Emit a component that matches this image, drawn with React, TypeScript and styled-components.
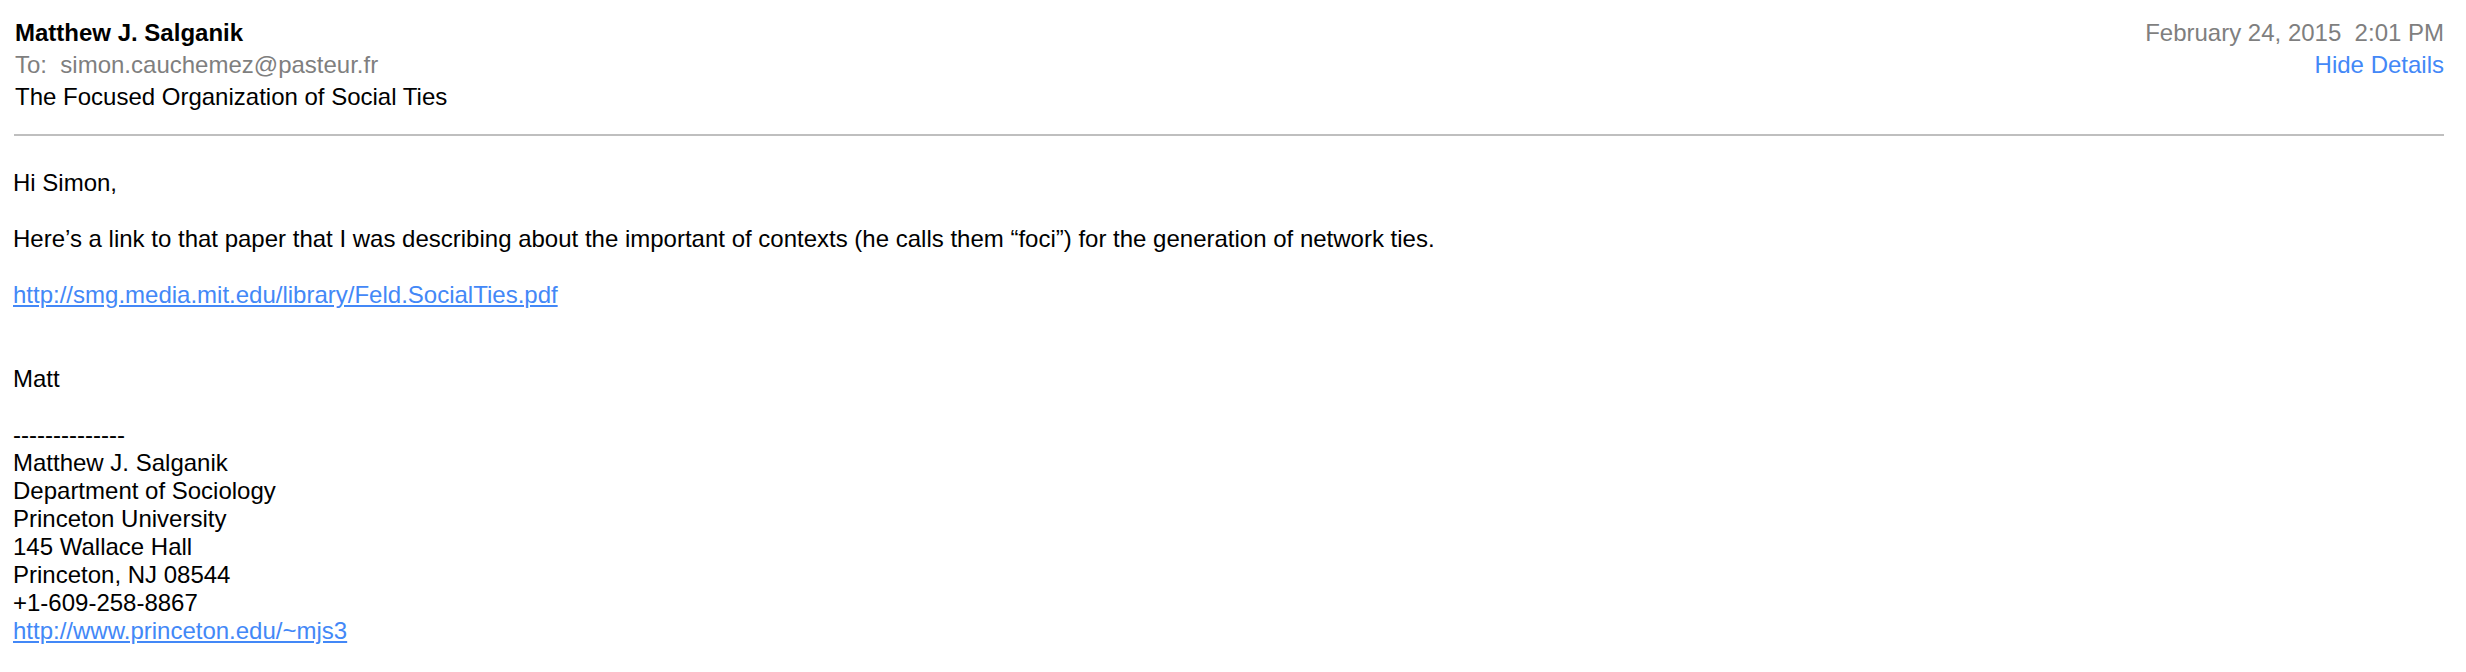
import styled, { createGlobalStyle } from "styled-components";

const GlobalStyle = createGlobalStyle`
  html, body {
    margin: 0;
    padding: 0;
    background: #ffffff;
  }
  body {
    font-family: "Liberation Sans", Arial, Helvetica, sans-serif;
    color: #000000;
  }
`;

const Message = styled.div`
  padding: 0 22px 0 13px;
`;

const Header = styled.div`
  display: flex;
  justify-content: space-between;
  align-items: flex-start;
  margin-left: 1px;
  padding-top: 17px;
  padding-left: 1px;
  padding-bottom: 21px;
  border-bottom: 2px solid #bfbfbf;
  font-size: 24px;
  line-height: 32px;
`;

const HeaderLeft = styled.div`
  display: flex;
  flex-direction: column;
`;

const HeaderRight = styled.div`
  display: flex;
  flex-direction: column;
  align-items: flex-end;
`;

const Sender = styled.div`
  font-weight: bold;
`;

const Meta = styled.div`
  color: #7f7f7f;
  white-space: pre;
`;

const Subject = styled.div``;

const DetailsLink = styled.a`
  color: #4388f7;
  text-decoration: none;
  cursor: pointer;
`;

const Body = styled.div`
  padding-top: 33px;
  font-size: 24px;
  line-height: 28px;
`;

const Line = styled.div<{ $gap?: number }>`
  min-height: 28px;
  margin-bottom: ${(p) => (p.$gap ?? 0) * 28}px;
`;

const Link = styled.a`
  color: #4388f7;
  text-decoration: underline;
  text-underline-offset: 2px;
`;

const signature = [
  "Matthew J. Salganik",
  "Department of Sociology",
  "Princeton University",
  "145 Wallace Hall",
  "Princeton, NJ 08544",
  "+1-609-258-8867",
];

export default function App() {
  return (
    <>
      <GlobalStyle />
      <Message>
        <Header>
          <HeaderLeft>
            <Sender>Matthew J. Salganik</Sender>
            <Meta>To:  simon.cauchemez@pasteur.fr</Meta>
            <Subject>The Focused Organization of Social Ties</Subject>
          </HeaderLeft>
          <HeaderRight>
            <Meta>February 24, 2015  2:01 PM</Meta>
            <DetailsLink>Hide Details</DetailsLink>
          </HeaderRight>
        </Header>
        <Body>
          <Line $gap={1}>Hi Simon,</Line>
          <Line $gap={1}>
            Here’s a link to that paper that I was describing about the
            important of contexts (he calls them “foci”) for the generation of
            network ties.
          </Line>
          <Line $gap={2}>
            <Link href="#">http://smg.media.mit.edu/library/Feld.SocialTies.pdf</Link>
          </Line>
          <Line $gap={1}>Matt</Line>
          <Line>--------------</Line>
          {signature.map((s) => (
            <Line key={s}>{s}</Line>
          ))}
          <Line>
            <Link href="#">http://www.princeton.edu/~mjs3</Link>
          </Line>
        </Body>
      </Message>
    </>
  );
}
